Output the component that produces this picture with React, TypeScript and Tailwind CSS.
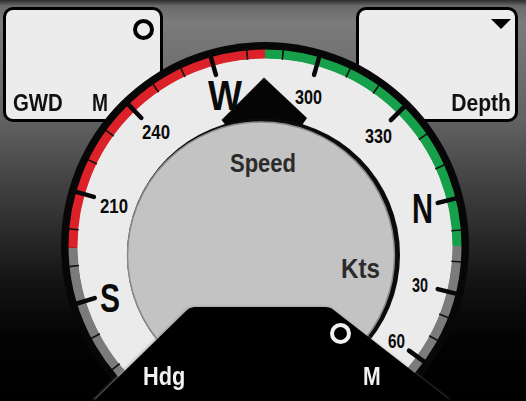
import React from "react";

const CX = 265;
const CY = 246;
const MAJ: [number, number][] = [
  [150, -140],
  [180, -107],
  [210, -74],
  [240, -44],
  [270, -16],
  [300, 16],
  [330, 45],
  [360, 76],
  [390, 104],
  [420, 126],
  [450, 146],
];

function ang(c: number): number {
  for (let i = 0; i < MAJ.length - 1; i++) {
    const [c0, a0] = MAJ[i];
    const [c1, a1] = MAJ[i + 1];
    if (c >= c0 && c <= c1) return a0 + ((c - c0) / (c1 - c0)) * (a1 - a0);
  }
  return 0;
}

function pt(r: number, a: number): [number, number] {
  const t = (a * Math.PI) / 180;
  return [CX + r * Math.sin(t), CY - r * Math.cos(t)];
}

function arc(r: number, a0: number, a1: number): string {
  const [x0, y0] = pt(r, a0);
  const [x1, y1] = pt(r, a1);
  const large = a1 - a0 > 180 ? 1 : 0;
  return `M${x0.toFixed(2)} ${y0.toFixed(2)}A${r} ${r} 0 ${large} 1 ${x1.toFixed(2)} ${y1.toFixed(2)}`;
}

const FONT = "'Liberation Sans', Arial, sans-serif";

type Lbl = { t: string; x: number; y: number; s: number; w: number };
const LABELS: Lbl[] = [
  { t: "W", x: 208, y: 110, s: 42, w: 34 },
  { t: "N", x: 412, y: 223, s: 42, w: 21 },
  { t: "S", x: 100, y: 312, s: 41, w: 20 },
  { t: "300", x: 295, y: 104, s: 20, w: 27 },
  { t: "330", x: 365, y: 143, s: 20, w: 27 },
  { t: "240", x: 142, y: 139, s: 20, w: 28 },
  { t: "210", x: 100, y: 213, s: 20, w: 28 },
  { t: "30", x: 412, y: 292, s: 20, w: 16 },
  { t: "60", x: 388, y: 348, s: 20, w: 17 },
];

function Dial() {
  const minors: number[] = [];
  const majors: number[] = [];
  for (let c = 150; c <= 450; c += 10) {
    if (c % 30 === 0) majors.push(c);
    else minors.push(c);
  }
  const redA0 = ang(195);
  const zero = ang(285);
  const greenA1 = ang(375);
  return (
    <svg
      className="absolute inset-0"
      width={526}
      height={401}
      viewBox="0 0 526 401"
    >
      <circle cx={CX} cy={CY} r={204} fill="#070707" />
      <circle cx={CX} cy={CY} r={188} fill="#ebebeb" />
      <path d={arc(192, -150, redA0)} stroke="#7b7b7b" strokeWidth={9} fill="none" />
      <path d={arc(192, redA0, zero)} stroke="#dc2129" strokeWidth={9} fill="none" />
      <path d={arc(192, zero, greenA1)} stroke="#17a04a" strokeWidth={9} fill="none" />
      <path d={arc(192, greenA1, 150)} stroke="#7b7b7b" strokeWidth={9} fill="none" />
      {minors.map((c) => {
        const a = ang(c);
        const [x0, y0] = pt(187, a);
        const [x1, y1] = pt(197, a);
        return <line key={c} x1={x0} y1={y0} x2={x1} y2={y1} stroke="#111" strokeWidth={1.6} />;
      })}
      {majors.map((c) => {
        const a = ang(c);
        const [x0, y0] = pt(178, a);
        const [x1, y1] = pt(200, a);
        return (
          <line
            key={c}
            x1={x0}
            y1={y0}
            x2={x1}
            y2={y1}
            stroke="#080808"
            strokeWidth={4.5}
            strokeLinecap="round"
          />
        );
      })}
      {/* heading pointer (base tucked under the disc) */}
      <path d="M264 77.5 L307 118 L300 128 L228 128 L221.5 120 Z" fill="#050505" />
      {/* inner speed disc */}
      <circle cx={263.5} cy={255} r={136.5} fill="#0b0b0b" />
      <circle cx={261} cy={255.5} r={133.5} fill="#c3c3c3" stroke="#8a8a8a" strokeWidth={1.5} />
      {LABELS.map((l) => (
        <text
          key={l.t}
          x={l.x}
          y={l.y}
          fontFamily={FONT}
          fontWeight={700}
          fontSize={l.s}
          textLength={l.w}
          lengthAdjust="spacingAndGlyphs"
          fill="#0a0a0a"
        >
          {l.t}
        </text>
      ))}
      <text
        x={230}
        y={172}
        fontFamily={FONT}
        fontWeight={700}
        fontSize={25}
        textLength={66}
        lengthAdjust="spacingAndGlyphs"
        fill="#2b2b2b"
      >
        Speed
      </text>
      <text
        x={341}
        y={278}
        fontFamily={FONT}
        fontWeight={700}
        fontSize={28}
        textLength={39}
        lengthAdjust="spacingAndGlyphs"
        fill="#2b2b2b"
      >
        Kts
      </text>
    </svg>
  );
}

export default function App() {
  return (
    <div className="relative w-[526px] h-[401px] overflow-hidden bg-[linear-gradient(to_bottom,#2c2c2c_0px,#6a6a6a_6px,#7b7b7b_22px,#626262_120px,#3a3a3a_200px,#141414_280px,#030303_340px,#000_401px)] font-['Liberation_Sans',Arial,sans-serif]">
      <div className="flex justify-between pl-[3px] pr-[8px] pt-[7px]">
        <div className="w-[160px] h-[115px] rounded-[10px] border-[3px] border-black bg-[#ececec] flex flex-col justify-between pl-[7px] pr-[6px] pt-[9px] pb-[4px]">
          <div className="flex justify-end">
            <div className="w-[21px] h-[21px] rounded-full border-[4px] border-black" />
          </div>
          <div className="flex items-end text-[24px] font-bold leading-none text-[#111]">
            <span className="inline-block origin-left scale-x-[0.85]">GWD</span>
            <span className="inline-block origin-left scale-x-[0.8] ml-[20px]">M</span>
          </div>
        </div>
        <div className="w-[162px] h-[115px] rounded-[10px] border-[3px] border-black bg-[#ececec] flex flex-col items-end justify-between pr-[4px] pt-[9px] pb-[4px]">
          <div className="w-0 h-0 border-x-[10px] border-x-transparent border-t-[10px] border-t-black" />
          <span className="inline-block origin-right scale-x-[0.88] text-[24px] font-bold leading-none text-[#111]">
            Depth
          </span>
        </div>
      </div>
      <Dial />
      <div className="absolute left-[94px] top-[307px] w-[357px] h-[94px] drop-shadow-[-1px_-1px_1px_rgba(150,150,150,0.6)]">
        <div className="h-full w-full bg-black [clip-path:polygon(0_94px,91px_5px,95px_1.5px,100px_0,232px_0,237px_1px,241px_4px,357px_94px)] flex items-end pl-[49px] pb-[12px] text-[#f2f2f2] font-bold">
          <span className="inline-block origin-left scale-x-[0.87] text-[25px] leading-none">Hdg</span>
          <div className="ml-auto mr-[67px] flex flex-col items-start">
            <div className="w-[21px] h-[21px] rounded-full border-[4px] border-[#f2f2f2] -ml-[33px] mb-[20px]" />
            <span className="inline-block origin-left scale-x-[0.85] text-[25px] leading-none">M</span>
          </div>
        </div>
      </div>
    </div>
  );
}
